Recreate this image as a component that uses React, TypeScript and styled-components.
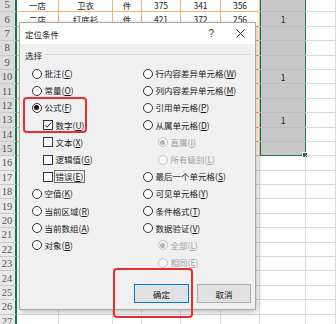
import React from "react";
import styled, { createGlobalStyle, css } from "styled-components";

const GlobalStyle = createGlobalStyle`
  html, body {
    margin: 0;
    padding: 0;
    overflow: hidden;
    background: #ffffff;
  }
  body {
    font-family: "Noto Sans CJK SC", "Noto Sans", sans-serif;
  }
`;

const CJK = `"Noto Sans CJK SC", "Noto Sans", sans-serif`;

type Tone = "head" | "table" | "plain" | "sel";

interface RowData {
  n: number;
  cells: string[];
}

const topRows: RowData[] = [
  { n: 5, cells: ["一店", "卫衣", "件", "375", "341", "356", "", ""] },
  { n: 6, cells: ["二店", "打底衫", "件", "421", "372", "256", "1", ""] },
];

const ones: Record<number, string> = { 10: "1", 13: "1" };

const buildRows = (): RowData[] => {
  const list: RowData[] = [...topRows];
  for (let n = 7; n <= 27; n++) {
    list.push({ n, cells: ["", "", "", "", "", "", ones[n] || "", ""] });
  }
  return list;
};

const App: React.FunctionComponent = () => {
  const rows = buildRows();
  return (
    <>
      <GlobalStyle />
      <Screen>
        <Sheet>
          {rows.map((r) => (
            <React.Fragment key={r.n}>
              <HeadCell $sel={r.n <= 15}>{r.n}</HeadCell>
              {r.cells.map((c, i) => {
                const inTable = r.n <= 15;
                const tone: Tone =
                  i === 6 && inTable ? "sel" : i < 6 && inTable ? "table" : "plain";
                return (
                  <Cell key={i} $tone={tone} $last={r.n === 15 && i === 6}>
                    {c}
                    {r.n === 15 && i === 6 && <Handle />}
                  </Cell>
                );
              })}
            </React.Fragment>
          ))}
        </Sheet>

        <Dialog>
          <TitleBar>
            <Title>定位条件</Title>
            <TitleTools>
              <Help>?</Help>
              <svg width="9" height="9" viewBox="0 0 9 9">
                <path d="M0.5 0.5 L8.5 8.5 M8.5 0.5 L0.5 8.5" stroke="#333" strokeWidth="1" />
              </svg>
            </TitleTools>
          </TitleBar>
          <Body>
            <GroupHead>
              <GroupLabel>选择</GroupLabel>
              <GroupLine />
            </GroupHead>
            <Columns>
              <Column>
                <Radio label="批注" k="C" />
                <Radio label="常量" k="O" />
                <Radio label="公式" k="F" checked />
                <Check label="数字" k="U" checked />
                <Check label="文本" k="X" />
                <Check label="逻辑值" k="G" />
                <Check label="错误" k="E" focus />
                <Radio label="空值" k="K" />
                <Radio label="当前区域" k="R" />
                <Radio label="当前数组" k="A" />
                <Radio label="对象" k="B" />
              </Column>
              <Column>
                <Radio label="行内容差异单元格" k="W" />
                <Radio label="列内容差异单元格" k="M" />
                <Radio label="引用单元格" k="P" />
                <Radio label="从属单元格" k="D" />
                <Radio label="直属" k="I" sub disabled checked />
                <Radio label="所有级别" k="L" sub disabled />
                <Radio label="最后一个单元格" k="S" />
                <Radio label="可见单元格" k="Y" />
                <Radio label="条件格式" k="T" />
                <Radio label="数据验证" k="V" />
                <Radio label="全部" k="L" sub disabled checked />
                <Radio label="相同" k="E" sub disabled />
              </Column>
            </Columns>
            <Buttons>
              <Button $primary>确定</Button>
              <Button>取消</Button>
            </Buttons>
          </Body>
        </Dialog>

        <Mark $x={23} $y={97} $w={64} $h={36} />
        <Mark $x={113} $y={268} $w={80} $h={50} />
      </Screen>
    </>
  );
};

export default App;

interface OptionProps {
  label: string;
  k: string;
  checked?: boolean;
  disabled?: boolean;
  sub?: boolean;
  focus?: boolean;
}

const Radio: React.FunctionComponent<OptionProps> = ({ label, k, checked, disabled, sub }) => (
  <Option $indent={sub ? 15 : 0}>
    <RadioDot $disabled={!!disabled}>{checked && <Dot $disabled={!!disabled} />}</RadioDot>
    <OptionText $disabled={!!disabled}>
      {label}(<u>{k}</u>)
    </OptionText>
  </Option>
);

const Check: React.FunctionComponent<OptionProps> = ({ label, k, checked, focus }) => (
  <Option $indent={11}>
    <Box>
      {checked && (
        <svg width="8" height="8" viewBox="0 0 8 8">
          <path d="M1 4.2 L3.1 6.3 L7 1.6" fill="none" stroke="#222" strokeWidth="1" />
        </svg>
      )}
    </Box>
    <OptionText $disabled={false} $focus={!!focus}>
      {label}(<u>{k}</u>)
    </OptionText>
  </Option>
);

const Screen = styled.div`
  position: relative;
  width: 336px;
  height: 324px;
  overflow: hidden;
  background: #ffffff;
`;

const Sheet = styled.div`
  display: grid;
  grid-template-columns: 17px 42px 54px 29px 39px 40px 39px 46px 30px;
  grid-auto-rows: 14.4px;
  margin-top: -2px;
`;

const HeadCell = styled.div<{ $sel: boolean }>`
  box-sizing: border-box;
  background: ${(p) => (p.$sel ? "#dcdcdc" : "#e9e9e9")};
  border-bottom: 1px solid #c9c9c9;
  border-right: 2px solid #217346;
  color: #555;
  font-family: "Liberation Serif", serif;
  font-size: 10.5px;
  display: flex;
  align-items: center;
  justify-content: center;
  padding-right: 1px;
`;

const toneStyles = {
  table: css`
    border-right: 1px solid #f4b27c;
    border-bottom: 1px solid #f4b27c;
  `,
  plain: css`
    border-right: 1px solid #dadada;
    border-bottom: 1px solid #dadada;
  `,
  sel: css`
    background: #c8c8c8;
    border-bottom: 1px solid #bdbdbd;
    box-shadow: inset 1px 0 #217346, inset -1px 0 #217346;
  `,
  head: css``,
};

const Cell = styled.div<{ $tone: Tone; $last: boolean }>`
  position: relative;
  box-sizing: border-box;
  display: flex;
  align-items: center;
  justify-content: center;
  font-family: ${CJK};
  font-size: 8.5px;
  color: #222;
  ${(p) => toneStyles[p.$tone]}
  ${(p) =>
    p.$last &&
    css`
      border-bottom: 1px solid #217346;
    `}
`;

const Handle = styled.span`
  position: absolute;
  right: -2px;
  bottom: -3px;
  width: 4px;
  height: 4px;
  background: #217346;
  border: 1px solid #ffffff;
`;

const Dialog = styled.div`
  position: absolute;
  left: 19px;
  top: 22px;
  width: 237px;
  height: 288px;
  box-sizing: border-box;
  display: flex;
  flex-direction: column;
  background: #f0f0f0;
  border: 1px solid #a9a9a9;
  box-shadow: 1px 2px 6px rgba(0, 0, 0, 0.28);
`;

const TitleBar = styled.div`
  height: 21px;
  display: flex;
  align-items: center;
  justify-content: space-between;
  background: #ffffff;
  padding: 0 10px 0 5px;
`;

const Title = styled.span`
  font-family: ${CJK};
  font-size: 8.5px;
  color: #111;
`;

const TitleTools = styled.div`
  display: flex;
  align-items: center;
  gap: 22px;
`;

const Help = styled.span`
  font-family: "Liberation Sans", sans-serif;
  font-size: 10px;
  color: #333;
`;

const Body = styled.div`
  flex: 1;
  display: flex;
  flex-direction: column;
  padding: 4px 4px 6px 5px;
`;

const GroupHead = styled.div`
  display: flex;
  align-items: center;
  gap: 3px;
  height: 14px;
`;

const GroupLabel = styled.span`
  font-family: ${CJK};
  font-size: 8.5px;
  color: #222;
`;

const GroupLine = styled.div`
  flex: 1;
  height: 1px;
  margin-top: -1px;
  background: #d9d9d9;
`;

const Columns = styled.div`
  display: grid;
  grid-template-columns: 111px 1fr;
  padding: 3px 0 0 6.5px;
`;

const Column = styled.div`
  display: flex;
  flex-direction: column;
`;

const Option = styled.div<{ $indent: number }>`
  height: 17.2px;
  display: flex;
  align-items: center;
  gap: 3px;
  padding-left: ${(p) => p.$indent}px;
`;

const RadioDot = styled.span<{ $disabled: boolean }>`
  width: 10px;
  height: 10px;
  box-sizing: border-box;
  border-radius: 50%;
  border: 1px solid ${(p) => (p.$disabled ? "#c4c4c4" : "#333")};
  background: ${(p) => (p.$disabled ? "#f6f6f6" : "#fff")};
  display: flex;
  align-items: center;
  justify-content: center;
`;

const Dot = styled.span<{ $disabled: boolean }>`
  width: 5px;
  height: 5px;
  border-radius: 50%;
  background: ${(p) => (p.$disabled ? "#b4b4b4" : "#111")};
`;

const Box = styled.span`
  width: 10px;
  height: 10px;
  box-sizing: border-box;
  border: 1px solid #333;
  background: #fff;
  display: flex;
  align-items: center;
  justify-content: center;
`;

const OptionText = styled.span<{ $disabled: boolean; $focus?: boolean }>`
  font-family: ${CJK};
  font-size: 8.5px;
  line-height: 11px;
  white-space: nowrap;
  color: ${(p) => (p.$disabled ? "#a0a0a0" : "#1a1a1a")};
  ${(p) =>
    p.$focus &&
    css`
      outline: 1px solid #6e6e6e;
      outline-offset: 0;
      padding: 0 1px;
      margin-left: -1px;
    `}
  u {
    text-decoration-thickness: 1px;
    text-underline-offset: 1px;
  }
`;

const Buttons = styled.div`
  margin-top: auto;
  display: flex;
  justify-content: flex-end;
  gap: 8px;
`;

const Button = styled.button<{ $primary?: boolean }>`
  width: ${(p) => (p.$primary ? 55 : 54)}px;
  height: 19px;
  padding: 0;
  box-sizing: border-box;
  background: #e1e1e1;
  border: 1px solid ${(p) => (p.$primary ? "#0078d7" : "#adadad")};
  font-family: ${CJK};
  font-size: 8.5px;
  color: #111;
`;

const Mark = styled.div<{ $x: number; $y: number; $w: number; $h: number }>`
  position: absolute;
  left: ${(p) => p.$x}px;
  top: ${(p) => p.$y}px;
  width: ${(p) => p.$w}px;
  height: ${(p) => p.$h}px;
  box-sizing: border-box;
  border: 2px solid #ec2b2b;
  border-radius: 4px;
`;
